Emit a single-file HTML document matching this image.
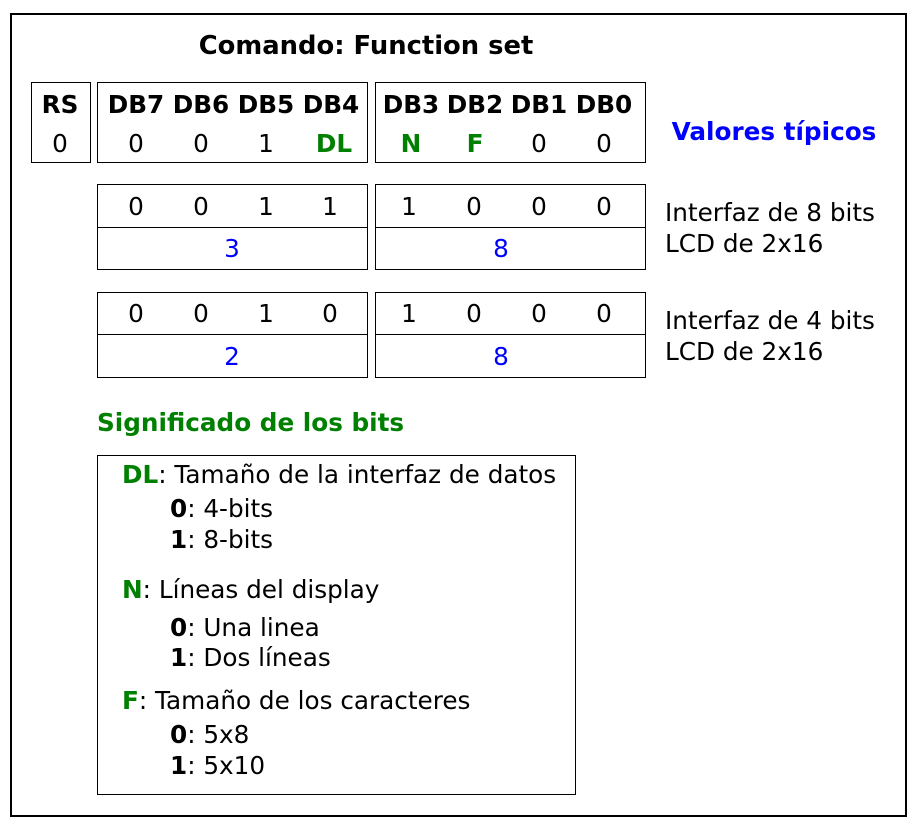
<!DOCTYPE html>
<html><head><meta charset="utf-8"><style>html,body{margin:0;padding:0;background:#fff}svg{display:block}text{font-family:"DejaVu Sans","Liberation Sans",sans-serif;font-size:24.7px}</style></head><body>
<svg width="917" height="830" xmlns="http://www.w3.org/2000/svg">
<rect x="11" y="14" width="895" height="802" fill="none" stroke="#000" stroke-width="2"/>
<g fill="none" stroke="#000" stroke-width="1">
<rect x="31.5" y="82.5" width="59" height="80"/>
<rect x="97.5" y="82.5" width="270" height="80"/>
<rect x="375.5" y="82.5" width="270" height="80"/>
<rect x="97.5" y="184.5" width="270" height="85"/><line x1="97" y1="227.5" x2="368" y2="227.5"/>
<rect x="375.5" y="184.5" width="270" height="85"/><line x1="375" y1="227.5" x2="646" y2="227.5"/>
<rect x="97.5" y="292.5" width="270" height="85"/><line x1="97" y1="334.5" x2="368" y2="334.5"/>
<rect x="375.5" y="292.5" width="270" height="85"/><line x1="375" y1="334.5" x2="646" y2="334.5"/>
<rect x="97.5" y="455.5" width="478" height="339"/>
</g>
<g text-anchor="middle">
<text x="366" y="54" font-weight="bold" style="font-size:25.8px">Comando: Function set</text>
<g font-weight="bold" style="font-size:25.3px">
<text x="60" y="113">RS</text>
<text x="136" y="113">DB7</text><text x="201" y="113">DB6</text><text x="266" y="113">DB5</text><text x="331" y="113">DB4</text>
<text x="411" y="113">DB3</text><text x="475" y="113">DB2</text><text x="539" y="113">DB1</text><text x="604" y="113">DB0</text>
</g>
<text x="60" y="152">0</text>
<text x="136" y="152">0</text><text x="201" y="152">0</text><text x="266" y="152">1</text><text x="334" y="152" fill="#008000" font-weight="bold">DL</text>
<text x="411" y="152" fill="#008000" font-weight="bold">N</text><text x="475" y="152" fill="#008000" font-weight="bold">F</text><text x="539" y="152">0</text><text x="604" y="152">0</text>
<text x="136" y="215">0</text><text x="201" y="215">0</text><text x="266" y="215">1</text><text x="330" y="215">1</text>
<text x="409" y="215">1</text><text x="474" y="215">0</text><text x="539" y="215">0</text><text x="604" y="215">0</text>
<text x="232" y="257" fill="#0000ff">3</text><text x="501" y="257" fill="#0000ff">8</text>
<text x="136" y="322">0</text><text x="201" y="322">0</text><text x="266" y="322">1</text><text x="330" y="322">0</text>
<text x="409" y="322">1</text><text x="474" y="322">0</text><text x="539" y="322">0</text><text x="604" y="322">0</text>
<text x="232" y="365" fill="#0000ff">2</text><text x="501" y="365" fill="#0000ff">8</text>
<text x="774" y="140" fill="#0000ff" font-weight="bold">Valores típicos</text>
</g>
<text x="665" y="221">Interfaz de 8 bits</text>
<text x="665" y="252">LCD de 2x16</text>
<text x="665" y="329">Interfaz de 4 bits</text>
<text x="665" y="360">LCD de 2x16</text>
<text x="97" y="431" fill="#008000" font-weight="bold">Significado de los bits</text>
<text x="122" y="483"><tspan fill="#008000" font-weight="bold">DL</tspan>: Tamaño de la interfaz de datos</text>
<text x="170" y="517"><tspan font-weight="bold">0</tspan>: 4-bits</text>
<text x="170" y="548"><tspan font-weight="bold">1</tspan>: 8-bits</text>
<text x="122" y="598"><tspan fill="#008000" font-weight="bold">N</tspan>: Líneas del display</text>
<text x="170" y="636"><tspan font-weight="bold">0</tspan>: Una linea</text>
<text x="170" y="666"><tspan font-weight="bold">1</tspan>: Dos líneas</text>
<text x="122" y="709"><tspan fill="#008000" font-weight="bold">F</tspan>: Tamaño de los caracteres</text>
<text x="170" y="743"><tspan font-weight="bold">0</tspan>: 5x8</text>
<text x="170" y="774"><tspan font-weight="bold">1</tspan>: 5x10</text>
</svg>
</body></html>
